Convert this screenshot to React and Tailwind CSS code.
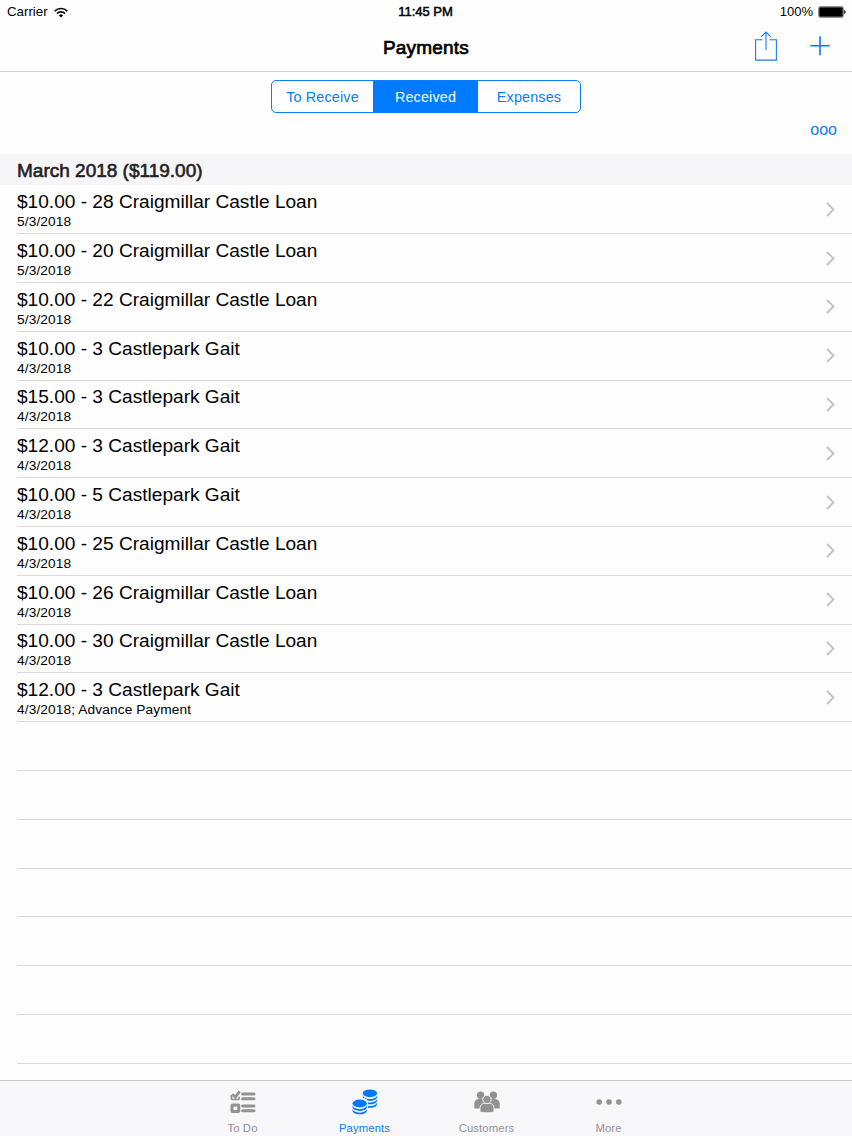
import { useState } from 'react'

const segments = [
  { id: 'due', label: 'To Receive', width: 'w-[101px]' },
  { id: 'received', label: 'Received', width: 'w-[105px]' },
  { id: 'expenses', label: 'Expenses', width: 'w-[102px]' },
]

const payments = [
  { title: '$10.00 - 28 Craigmillar Castle Loan', detail: '5/3/2018' },
  { title: '$10.00 - 20 Craigmillar Castle Loan', detail: '5/3/2018' },
  { title: '$10.00 - 22 Craigmillar Castle Loan', detail: '5/3/2018' },
  { title: '$10.00 - 3 Castlepark Gait', detail: '4/3/2018' },
  { title: '$15.00 - 3 Castlepark Gait', detail: '4/3/2018' },
  { title: '$12.00 - 3 Castlepark Gait', detail: '4/3/2018' },
  { title: '$10.00 - 5 Castlepark Gait', detail: '4/3/2018' },
  { title: '$10.00 - 25 Craigmillar Castle Loan', detail: '4/3/2018' },
  { title: '$10.00 - 26 Craigmillar Castle Loan', detail: '4/3/2018' },
  { title: '$10.00 - 30 Craigmillar Castle Loan', detail: '4/3/2018' },
  { title: '$12.00 - 3 Castlepark Gait', detail: '4/3/2018; Advance Payment' },
]

const emptyRows = [1, 2, 3, 4, 5, 6, 7]

function WifiIcon() {
  return (
    <svg width="14" height="11" viewBox="0 0 14 11" fill="none" stroke="#000" strokeWidth="1.6">
      <path d="M0.7 4.1a8.9 8.9 0 0 1 12.6 0" />
      <path d="M3 6.6a5.6 5.6 0 0 1 8 0" />
      <path d="M7 10.6 4.9 8.4a3 3 0 0 1 4.2 0z" fill="#000" stroke="none" />
    </svg>
  )
}

function BatteryIcon() {
  return (
    <svg width="28" height="12" viewBox="0 0 28 12">
      <rect x="0.5" y="0.5" width="25" height="11" rx="1.8" fill="none" stroke="#777" strokeWidth="0.8" />
      <rect x="1.2" y="1.2" width="23.6" height="9.6" rx="1.2" fill="#000" />
      <path d="M26.2 4a2.1 2.1 0 0 1 0 4z" fill="#000" />
    </svg>
  )
}

function ShareIcon() {
  return (
    <svg width="22" height="30" viewBox="0 0 22 30" fill="none" stroke="#1480f0" strokeWidth="1.1">
      <path d="M7.5 8.8H0.6v20.3h20.8V8.8h-6.9" />
      <path d="M11 19.2V1.2M6.2 5.7 11 1l4.8 4.7" />
    </svg>
  )
}

function PlusIcon() {
  return (
    <svg width="20" height="20" viewBox="0 0 20 20" stroke="#087cf5" strokeWidth="1.6">
      <path d="M10 0.2v19M0.3 9.7h19.4" />
    </svg>
  )
}

function Chevron() {
  return (
    <svg width="9" height="15" viewBox="0 0 9 15" fill="none" stroke="#c3c2c7" strokeWidth="1.9">
      <path d="M1 1l6.5 6.5L1 14" />
    </svg>
  )
}

function TodoIcon() {
  return (
    <svg width="26" height="24" viewBox="0 0 26 24" fill="none" stroke="#929292">
      <path d="M12.6 4h11.4M12.6 8.7h11.4M12.6 16h11.4M12.6 20.7h11.4" strokeWidth="3" strokeLinecap="round" />
      <path d="M1.4 5v3.4q0 1.1 1.2 1.1H8q1.1 0 1.1-1.1V6.7" strokeWidth="1.7" />
      <path d="m2.1 4.3 3.2 2.8L9.7 1.4" strokeWidth="2.8" />
      <rect x="2" y="15" width="6.8" height="6.6" rx="0.5" strokeWidth="3" />
    </svg>
  )
}

// One pile of coins, with a thin gap between layers
function CoinStack({ layers, x, y }) {
  return (
    <g transform={`translate(${x} ${y})`}>
      <ellipse cx="7.4" cy="4" rx="7.2" ry="3.9" />
      {layers.map(top => (
        <path
          key={top}
          d="M.2 0C.9 5.5 13.9 5.5 14.6 0V2C13.9 7.2.9 7.2.2 2Z"
          transform={`translate(0 ${top})`}
        />
      ))}
    </g>
  )
}

function CoinsIcon() {
  return (
    <svg width="26" height="26" viewBox="0 0 26 26" fill="#0079ff">
      <CoinStack x={10.5} y={0.3} layers={[5.6, 9.1, 12.6]} />
      <path d="M0 13c0-3 4-4.2 8-4.2s8 1.2 8 4.2v12H0z" fill="#f8f7fa" />
      <CoinStack x={0.3} y={10.5} layers={[5.6, 9.1]} />
    </svg>
  )
}

function CustomersIcon() {
  return (
    <svg width="26" height="22" viewBox="0 0 26 22" fill="#929292">
      <circle cx="6.6" cy="4.3" r="3.7" />
      <circle cx="19.4" cy="4.3" r="3.7" />
      <path d="M.3 17.6V13c0-3.2 2.1-4.9 5.5-4.9h14.4c3.4 0 5.5 1.7 5.5 4.9v4.6z" />
      <g stroke="#f8f7fa" strokeWidth="0.9">
        <path d="M6 21V17.4c0-3.9 2.2-5.4 7-5.4s7 1.5 7 5.4V21c-3.2 1.1-10.8 1.1-14 0z" />
        <circle cx="13" cy="8.5" r="4.1" />
      </g>
    </svg>
  )
}

function MoreIcon() {
  return (
    <svg width="26" height="6" viewBox="0 0 26 6" fill="#929292">
      <circle cx="3.2" cy="3" r="2.8" />
      <circle cx="13" cy="3" r="2.8" />
      <circle cx="22.8" cy="3" r="2.8" />
    </svg>
  )
}

const tabs = [
  { id: 'todo', label: 'To Do', icon: <TodoIcon /> },
  { id: 'payments', label: 'Payments', icon: <CoinsIcon /> },
  { id: 'customers', label: 'Customers', icon: <CustomersIcon /> },
  { id: 'more', label: 'More', icon: <MoreIcon /> },
]

export default function App() {
  const [segment, setSegment] = useState('received')
  const [tab, setTab] = useState('payments')

  return (
    <div className="flex h-[1136px] w-[852px] flex-col overflow-hidden bg-[#fefefe] font-['Liberation_Sans',Arial,sans-serif] text-black">
      {/* Status bar */}
      <div className="grid h-6 shrink-0 grid-cols-3 items-center pl-[7px] pr-[6px] text-[13.3px] leading-6">
        <div className="flex items-center gap-[6px]">
          <span>Carrier</span>
          <WifiIcon />
        </div>
        <div className="pr-0.5 text-center text-[13px] [-webkit-text-stroke:0.5px]">11:45 PM</div>
        <div className="flex items-center justify-end gap-[5px]">
          <span className="text-[13px]">100%</span>
          <BatteryIcon />
        </div>
      </div>

      {/* Navigation bar */}
      <header className="grid h-12 shrink-0 grid-cols-3 items-center border-b border-[#cfced2]">
        <h1 className="col-start-2 text-center text-[19px] leading-[46px] tracking-[0.2px] [-webkit-text-stroke:0.7px]">Payments</h1>
        <div className="flex items-center justify-end gap-[33px] pb-[3px] pr-[22px]">
          <button aria-label="Share"><ShareIcon /></button>
          <button aria-label="Add"><PlusIcon /></button>
        </div>
      </header>

      {/* Filter */}
      <div className="flex h-[82px] shrink-0 flex-col items-center pt-2">
        <div className="flex h-[33px] overflow-hidden rounded-[5px] border border-[#0a7cf5]">
          {segments.map(s => (
            <button
              key={s.id}
              onClick={() => setSegment(s.id)}
              className={`${s.width} pt-0.5 text-[14.4px] tracking-[0.15px] ${segment === s.id ? 'bg-[#007aff] text-white' : 'text-[#0a7cf5]'}`}
            >
              {s.label}
            </button>
          ))}
        </div>
        <button className="mr-[15px] mt-[7px] self-end text-[16px] leading-5 text-[#0a7cf5]">ooo</button>
      </div>

      {/* Payment list */}
      <main className="min-h-0 flex-1 overflow-hidden">
        <h2 className="h-[31.4px] bg-[#f6f5f8] pl-[17px] text-[19px] leading-[33px] text-[#222] [-webkit-text-stroke:0.6px]">
          March 2018 ($119.00)
        </h2>
        <ul className="pl-[17px]">
          {payments.map((p, i) => (
            <li key={i} className="flex h-[48.8px] items-center justify-between border-b border-[#d9d8dc] pr-[17px]">
              <div className="pt-[3px]">
                <div className="text-[19.1px] leading-[22px]">{p.title}</div>
                <div className="text-[13.7px] leading-[17px] tracking-[0.12px]">{p.detail}</div>
              </div>
              <Chevron />
            </li>
          ))}
          {emptyRows.map(n => (
            <li key={n} className="h-[48.8px] border-b border-[#d9d8dc]" />
          ))}
        </ul>
      </main>

      {/* Tab bar */}
      <nav className="flex h-14 shrink-0 justify-center border-t border-[#cbcacf] bg-[#f8f7fa] pr-px">
        {tabs.map(t => (
          <button
            key={t.id}
            onClick={() => setTab(t.id)}
            className={`flex w-[122px] flex-col items-center text-[11.3px] tracking-[0.12px] ${tab === t.id ? 'text-[#0a7cf5]' : 'text-[#929292]'}`}
          >
            <span className="flex h-[42px] items-center">{t.icon}</span>
            <span className="leading-[11px]">{t.label}</span>
          </button>
        ))}
      </nav>
    </div>
  )
}
